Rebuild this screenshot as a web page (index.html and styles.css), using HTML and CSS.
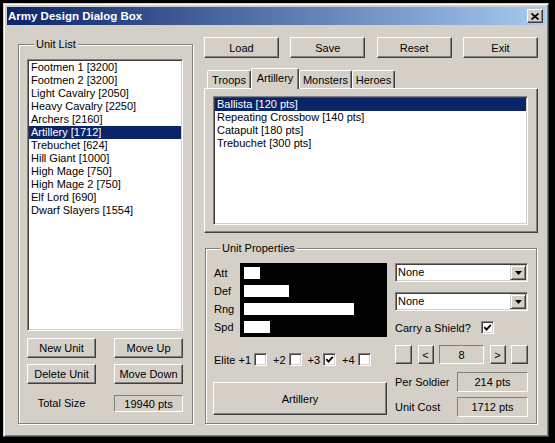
FILE: index.html
```html
<!DOCTYPE html>
<html lang="en">
<head>
  <meta charset="UTF-8">
  <meta name="viewport" content="width=device-width, initial-scale=1.0">
  <title>Army Design Dialog Box</title>
  <link rel="stylesheet" href="styles.css">
</head>
<body>
  <div class="window">
    <div class="titlebar">
      <span class="title">Army Design Dialog Box</span>
      <button class="close-btn" aria-label="Close">
        <svg width="8" height="7" viewBox="0 0 8 7"><path d="M0.5 0.5 L7.5 6.5 M7.5 0.5 L0.5 6.5" stroke="#000" stroke-width="1.7" fill="none"/></svg>
      </button>
    </div>

    <div class="client">
      <!-- left: the army -->
      <div class="group unit-list">
        <div class="group-title">Unit List</div>
        <div class="listbox units">
          <div class="item">Footmen 1 [3200]</div>
          <div class="item">Footmen 2 [3200]</div>
          <div class="item">Light Cavalry [2050]</div>
          <div class="item">Heavy Cavalry [2250]</div>
          <div class="item">Archers [2160]</div>
          <div class="item selected">Artillery [1712]</div>
          <div class="item">Trebuchet [624]</div>
          <div class="item">Hill Giant [1000]</div>
          <div class="item">High Mage [750]</div>
          <div class="item">High Mage 2 [750]</div>
          <div class="item">Elf Lord [690]</div>
          <div class="item">Dwarf Slayers [1554]</div>
        </div>
        <div class="unit-buttons">
          <button class="btn">New Unit</button>
          <button class="btn">Move Up</button>
          <button class="btn">Delete Unit</button>
          <button class="btn">Move Down</button>
        </div>
        <div class="total-row">
          <span class="total-label">Total Size</span>
          <span class="readout total">19940 pts</span>
        </div>
      </div>

      <!-- right: editor -->
      <div class="main">
        <div class="toolbar">
          <button class="btn">Load</button>
          <button class="btn">Save</button>
          <button class="btn">Reset</button>
          <button class="btn">Exit</button>
        </div>

        <div class="tabs">
          <div class="tab troops">Troops</div>
          <div class="tab active artillery">Artillery</div>
          <div class="tab monsters">Monsters</div>
          <div class="tab heroes">Heroes</div>
        </div>
        <div class="tab-panel">
          <div class="listbox catalog">
            <div class="item selected">Ballista [120 pts]</div>
            <div class="item">Repeating Crossbow [140 pts]</div>
            <div class="item">Catapult [180 pts]</div>
            <div class="item">Trebuchet [300 pts]</div>
          </div>
        </div>

        <div class="group props">
          <div class="group-title">Unit Properties</div>
          <div class="props-body">
            <div class="props-left">
              <div class="stats">
                <div class="stat-labels">
                  <span>Att</span>
                  <span>Def</span>
                  <span>Rng</span>
                  <span>Spd</span>
                </div>
                <div class="stat-box">
                  <div class="bar" style="width:16px"></div>
                  <div class="bar" style="width:45px"></div>
                  <div class="bar" style="width:110px"></div>
                  <div class="bar" style="width:26px"></div>
                </div>
              </div>
              <div class="elite">
                <span>Elite +1</span><span class="checkbox"></span>
                <span>+2</span><span class="checkbox"></span>
                <span>+3</span><span class="checkbox checked"><svg width="9" height="9" viewBox="0 0 9 9"><path d="M1.3 4.2 L3.5 6.6 L7.8 1.8" stroke="#000" stroke-width="1.8" fill="none"/></svg></span>
                <span>+4</span><span class="checkbox"></span>
              </div>
              <button class="btn big">Artillery</button>
            </div>

            <div class="props-right">
              <div class="combo">
                <span class="combo-text">None</span>
                <span class="combo-btn"><svg width="7" height="4" viewBox="0 0 7 4"><polygon points="0,0 7,0 3.5,4" fill="#000"/></svg></span>
              </div>
              <div class="combo second">
                <span class="combo-text">None</span>
                <span class="combo-btn"><svg width="7" height="4" viewBox="0 0 7 4"><polygon points="0,0 7,0 3.5,4" fill="#000"/></svg></span>
              </div>
              <div class="shield-row">
                <span>Carry a Shield?</span>
                <span class="checkbox checked"><svg width="9" height="9" viewBox="0 0 9 9"><path d="M1.3 4.2 L3.5 6.6 L7.8 1.8" stroke="#000" stroke-width="1.8" fill="none"/></svg></span>
              </div>
              <div class="spinner">
                <button class="btn spin wide"></button>
                <button class="btn spin">&lt;</button>
                <span class="readout count">8</span>
                <button class="btn spin">&gt;</button>
                <button class="btn spin wide"></button>
              </div>
              <div class="cost-row per">
                <span>Per Soldier</span>
                <span class="readout cost">214 pts</span>
              </div>
              <div class="cost-row unit">
                <span>Unit Cost</span>
                <span class="readout cost">1712 pts</span>
              </div>
            </div>
          </div>
        </div>
      </div>
    </div>
  </div>
</body>
</html>
```

FILE: styles.css
```css
body {
  margin: 0;
  background-color: #000;
  font-family: "Liberation Sans", Arial, sans-serif;
  font-size: 11px;
  color: #000;
}
.window {
  margin: 3px 0 0 3px;
  width: 546px;
  height: 434px;
  box-sizing: border-box;
  background-color: #d4d0c8;
  border: 1px solid;
  border-color: #d4d0c8 #404040 #404040 #d4d0c8;
  box-shadow: inset 1px 1px 0 #fff, inset -1px -1px 0 #808080;
  padding: 3px;
  display: flex;
  flex-direction: column;
}
.titlebar {
  height: 18px;
  display: flex;
  align-items: center;
  justify-content: space-between;
  padding: 0 2px 0 1px;
  background: linear-gradient(to right, #0a246a, #a6caf0);
  color: #fff;
  font-weight: bold;
  font-size: 11.5px;
}
.close-btn {
  width: 16px;
  height: 14px;
  padding: 0;
  display: flex;
  align-items: center;
  justify-content: center;
  background-color: #d4d0c8;
  border: 1px solid;
  border-color: #fff #404040 #404040 #fff;
  box-shadow: inset -1px -1px 0 #808080;
}

/* shared controls */
.btn {
  font: inherit;
  color: #000;
  padding: 0;
  background-color: #d4d0c8;
  border: 1px solid;
  border-color: #fff #404040 #404040 #fff;
  box-shadow: inset -1px -1px 0 #808080;
}
.listbox {
  box-sizing: border-box;
  background-color: #fff;
  border: 1px solid;
  border-color: #808080 #fff #fff #808080;
  box-shadow: inset 1px 1px 0 #404040, inset -1px -1px 0 #d4d0c8;
  padding: 1px;
  overflow: hidden;
}
.item {
  height: 13px;
  line-height: 13px;
  padding-left: 2px;
  white-space: nowrap;
}
.item.selected {
  background-color: #0a246a;
  color: #fff;
}
.readout {
  box-sizing: border-box;
  display: flex;
  align-items: center;
  justify-content: center;
  border: 1px solid;
  border-color: #808080 #fff #fff #808080;
}
.checkbox {
  box-sizing: border-box;
  width: 13px;
  height: 13px;
  display: inline-flex;
  align-items: center;
  justify-content: center;
  background-color: #fff;
  border: 1px solid;
  border-color: #808080 #fff #fff #808080;
  box-shadow: inset 1px 1px 0 #404040, inset -1px -1px 0 #d4d0c8;
}
.group {
  box-sizing: border-box;
  border: 1px solid #808080;
  box-shadow: inset 1px 1px 0 #fff, 1px 1px 0 #fff;
}
.group-title {
  width: max-content;
  margin: -7px 0 0 7px;
  padding: 0 2px;
  line-height: 13px;
  background-color: #d4d0c8;
}

/* layout */
.client {
  flex: 1;
  display: flex;
  gap: 11px;
  padding: 12px 7px 9px 11px;
}
.unit-list {
  width: 175px;
  margin-top: 7px;
  padding: 0 9px 0 8px;
}
.unit-list .group-title {
  margin-bottom: 8px;
}
.units {
  height: 272px;
}
.unit-buttons {
  display: grid;
  grid-template-columns: 69px 69px;
  grid-auto-rows: 20px;
  column-gap: 18px;
  row-gap: 6px;
  margin-top: 7px;
}
.total-row {
  display: grid;
  grid-template-columns: 69px 69px;
  column-gap: 18px;
  height: 17px;
  margin-top: 11px;
}
.total-label {
  text-align: center;
  line-height: 17px;
}

.main {
  flex: 1;
  display: flex;
  flex-direction: column;
}
.toolbar {
  display: flex;
  justify-content: space-between;
}
.toolbar .btn {
  width: 75px;
  height: 21px;
}
.tabs {
  display: flex;
  align-items: flex-end;
  height: 20px;
  margin-top: 10px;
  padding-left: 3px;
}
.tab {
  box-sizing: border-box;
  height: 18px;
  display: flex;
  align-items: center;
  justify-content: center;
  border: 1px solid;
  border-bottom: none;
  border-color: #fff #404040 #404040 #fff;
  border-radius: 2px 2px 0 0;
  box-shadow: inset -1px 0 0 #808080;
  background-color: #d4d0c8;
}
.tab.troops { width: 44px; }
.tab.artillery { width: 48px; }
.tab.monsters { width: 53px; }
.tab.heroes { width: 43px; }
.tab.active {
  height: 21px;
  margin-bottom: -1px;
  padding-bottom: 3px;
  z-index: 1;
}
.tab-panel {
  box-sizing: border-box;
  height: 145px;
  padding: 7px 9px 7px 8px;
  border: 1px solid;
  border-color: #fff #404040 #404040 #fff;
  box-shadow: inset -1px -1px 0 #808080;
}
.catalog {
  height: 100%;
}

.props {
  flex: 1;
  margin: 15px 1px 0 1px;
  padding: 0 8px 0 7px;
}
.props-body {
  display: flex;
  justify-content: space-between;
  margin-top: 8px;
}
.props-left {
  width: 174px;
  display: flex;
  flex-direction: column;
}
.stats {
  display: flex;
}
.stat-labels {
  width: 27px;
  display: flex;
  flex-direction: column;
  gap: 6px;
  padding: 4px 0 0 1px;
  box-sizing: border-box;
}
.stat-labels span {
  height: 12px;
  line-height: 12px;
}
.stat-box {
  box-sizing: border-box;
  width: 147px;
  height: 74px;
  padding: 4px;
  display: flex;
  flex-direction: column;
  gap: 6px;
  background-color: #000;
}
.bar {
  height: 12px;
  background-color: #fff;
}
.elite {
  display: flex;
  align-items: center;
  height: 13px;
  margin-top: 16px;
  padding-left: 1px;
}
.elite span:not(.checkbox) {
  margin-right: 3px;
}
.elite .checkbox {
  margin-right: 6px;
}
.btn.big {
  height: 33px;
  margin-top: 16px;
}

.props-right {
  width: 133px;
  display: flex;
  flex-direction: column;
}
.combo {
  box-sizing: border-box;
  height: 19px;
  display: flex;
  background-color: #fff;
  border: 1px solid;
  border-color: #808080 #fff #fff #808080;
  box-shadow: inset 1px 1px 0 #404040, inset -1px -1px 0 #d4d0c8;
  padding: 1px;
}
.combo.second {
  margin-top: 10px;
}
.combo-text {
  flex: 1;
  padding-left: 1px;
  line-height: 15px;
}
.combo-btn {
  box-sizing: border-box;
  width: 16px;
  display: flex;
  align-items: center;
  justify-content: center;
  background-color: #d4d0c8;
  border: 1px solid;
  border-color: #d4d0c8 #404040 #404040 #d4d0c8;
  box-shadow: inset 1px 1px 0 #fff, inset -1px -1px 0 #808080;
}
.shield-row {
  display: flex;
  align-items: center;
  height: 13px;
  margin-top: 10px;
}
.shield-row .checkbox {
  margin-left: 10px;
}
.spinner {
  display: flex;
  justify-content: space-between;
  height: 19px;
  margin-top: 11px;
}
.btn.spin {
  width: 16px;
  height: 19px;
}
.btn.spin.wide {
  width: 17px;
}
.readout.count {
  width: 45px;
}
.cost-row {
  display: flex;
  justify-content: space-between;
  align-items: center;
}
.cost-row.per {
  margin-top: 8px;
}
.cost-row.unit {
  margin-top: 5px;
}
.readout.cost {
  width: 71px;
  height: 20px;
}
.readout.total {
  height: 17px;
}
```
